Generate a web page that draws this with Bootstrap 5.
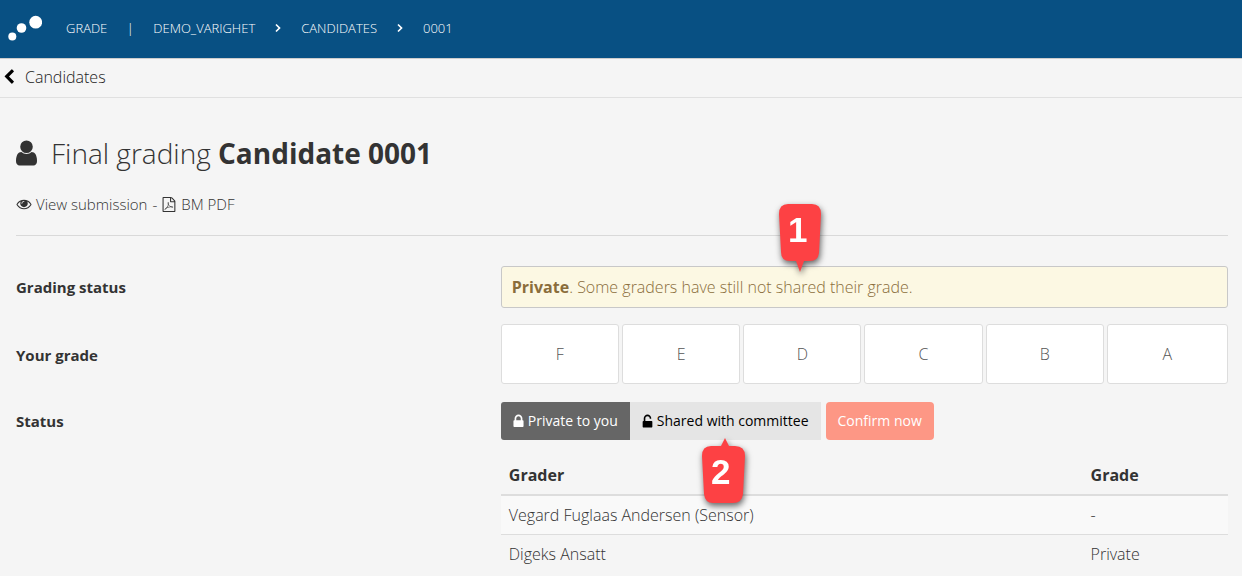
<!DOCTYPE html>
<html lang="en">
<head>
<meta charset="utf-8">
<meta name="viewport" content="width=device-width, initial-scale=1">
<title>Final grading - Candidate 0001</title>
<link href="https://cdn.jsdelivr.net/npm/bootstrap@5.3.0/dist/css/bootstrap.min.css" rel="stylesheet">
<style>
body { font-family: "Open Sans", sans-serif; font-size: 15px; font-weight: 300; line-height: 22px; color: #333; background: #f5f5f5; }
a { color: inherit; text-decoration: none; }
strong, .row-label, th { font-weight: 700; }
svg.glyph { width: 1em; height: 1em; fill: currentColor; flex: none; }
svg.lock { width: 11px; }
.topbar { background: #085083; color: #fff; height: 58px; font-size: 13px; gap: 16px; padding: 0 8px 2px; }
.brand-dots { width: 34px; height: 26px; margin-right: 8px; }
.sep { width: 14px; text-align: center; }
.backbar { border-top: 1px solid #ccc; border-bottom: 1px solid #e0e0e0; height: 40px; padding: 0 1px 2px; color: #222; font-size: 16px; }
.backbar .glyph { color: #000; }
.page { padding: 35px 14px 0 16px; }
.title { font-size: 28px; font-weight: 300; line-height: 40px; gap: 14px; margin-bottom: 20px; }
.title .glyph { width: 21px; height: 28px; }
.tools { gap: 5px; padding-bottom: 20px; border-bottom: 1px solid #d9d9d9; margin-bottom: 30px; }
.tools a { gap: 4px; }
.tools .eye { width: 16px; }
.form-line { display: grid; grid-template-columns: 2fr 3fr; align-items: center; }
.notice { background: #fcf8e3; border: 1px solid #c8c8c8; border-radius: 3px; color: #8a6d3b; font-size: 16px; padding: 9px 10px; margin-bottom: 16px; }
.grades { display: grid; grid-template-columns: repeat(6, 1fr); margin-bottom: 18px; }
.grade-btn { height: 60px; background: #fff; border: 1px solid #ddd; border-radius: 3px; color: #555; font-size: 16px; font-weight: 300; margin-right: 3px; }
.grade-btn:last-child { margin-right: 0; }
.state-btn { font-size: 14px; font-weight: 400; line-height: 22px; height: 38px; padding: 8px 12px; border: 0; border-radius: 3px; gap: 4px; }
.state-on { background: #666; color: #fff; border-radius: 3px 0 0 3px; }
.state-off { background: #e5e5e5; color: #000; border-radius: 0; }
.confirm { background: #fd9785; color: #fff; margin-left: 5px; border-radius: 4px; }
.graders { font-size: 16px; }
.graders th, .graders td { padding: 8px; }
.graders th { border-bottom: 2px solid #ddd; }
.graders tr + tr td { border-top: 1px solid #ddd; }
.graders tbody tr:nth-child(odd) { background: #f9f9f9; }
.callout-pin { position: absolute; z-index: 3; width: 44px; height: 68px; color: #fff; font: bold 35px/52px "Liberation Sans", sans-serif; text-align: center; pointer-events: none; filter: drop-shadow(1px 3px 3px rgba(0,0,0,.6)); }
.callout-pin svg { position: absolute; inset: 0; z-index: -1; fill: #fd4144; }
.pin-down { left: 276px; top: -63px; padding-right: 4px; }
.pin-up { left: 71px; top: 35px; padding: 9px 4px 0 0; }
</style>
</head>
<body>
<nav class="topbar d-flex align-items-center">
  <a href="#" aria-label="Home" class="d-flex"><svg class="brand-dots" viewBox="0 0 34 26" fill="#fff"><circle cx="4.3" cy="21.5" r="4"/><circle cx="13.5" cy="13" r="4.8"/><circle cx="27.7" cy="7.2" r="6.4"/></svg></a>
  <a href="#">GRADE</a><span class="sep">|</span>
  <a href="#">DEMO_VARIGHET</a>
  <svg class="sep" height="10" viewBox="0 0 14 10" fill="none" stroke="#fff" stroke-width="1.7"><path d="M5 1.5 8.5 5 5 8.5"/></svg>
  <a href="#">CANDIDATES</a>
  <svg class="sep" height="10" viewBox="0 0 14 10" fill="none" stroke="#fff" stroke-width="1.7"><path d="M5 1.5 8.5 5 5 8.5"/></svg>
  <a href="#">0001</a>
</nav>
<div class="backbar d-flex align-items-center">
  <a href="#" class="d-flex align-items-center gap-2"><svg class="glyph" viewBox="0 0 1792 1792"><path d="M1427 301l-531 531 531 531q19 19 19 45t-19 45l-166 166q-19 19-45 19t-45-19l-742-742q-19-19-19-45t19-45l742-742q19-19 45-19t45 19l166 166q19 19 19 45t-19 45z"/></svg>Candidates</a>
</div>
<main class="page">
  <h1 class="title d-flex align-items-center"><svg class="glyph" viewBox="256 64 1280 1664"><path d="M1536 1399q0 109-62.5 187t-150.5 78h-854q-88 0-150.5-78t-62.5-187q0-85 8.5-160.5t31.5-152 58.5-131 94-89 134.5-34.5q131 128 313 128t313-128q76 0 134.5 34.5t94 89 58.5 131 31.5 152 8.5 160.5zm-256-887q0 159-112.5 271.5t-271.5 112.5-271.5-112.5-112.5-271.5 112.5-271.5 271.5-112.5 271.5 112.5 112.5 271.5z"/></svg><span>Final grading <strong>Candidate 0001</strong></span></h1>
  <div class="tools d-flex align-items-center">
    <a href="#" class="d-flex align-items-center"><svg class="glyph eye" viewBox="0 64 1792 1792"><path d="M1664 960q-152-236-381-353 61 104 61 225 0 185-131.5 316.5t-316.5 131.5-316.5-131.5-131.5-316.5q0-121 61-225-229 117-381 353 133 205 333.5 326.5t434.5 121.5 434.5-121.5 333.5-326.5zm-720-384q0-20-14-34t-34-14q-125 0-214.5 89.5t-89.5 214.5q0 20 14 34t34 14 34-14 14-34q0-86 61-147t147-61q20 0 34-14t14-34zm848 384q0 34-20 69-140 230-376.5 368.5t-499.5 138.5-499.5-139-376.5-368q-20-35-20-69t20-69q140-229 376.5-368t499.5-139 499.5 139 376.5 368q20 35 20 69z"/></svg>View submission</a>
    <span>-</span>
    <a href="#" class="d-flex align-items-center"><svg class="glyph" viewBox="64 0 1792 1792"><path d="M1596 380q28 28 48 76t20 88v1152q0 40-28 68t-68 28h-1344q-40 0-68-28t-28-68v-1600q0-40 28-68t68-28h896q40 0 88 20t76 48zm-444-244v376h376q-10-29-22-41l-313-313q-12-12-41-22zm384 1528v-1024h-416q-40 0-68-28t-28-68v-416h-768v1536h1280z"/><path d="M400 1500Q640 1380 790 1020 880 790 810 640 750 760 850 950 960 1150 1320 1230 1400 1220 1360 1180 1160 1100 700 1260 440 1360 400 1500" fill="none" stroke="currentColor" stroke-width="75"/></svg>BM PDF</a>
  </div>

  <div class="form-line">
    <div class="row-label pb-3">Grading status</div>
    <div class="notice position-relative" role="status"><strong>Private</strong>. Some graders have still not shared their grade.
      <span class="callout-pin pin-down"><svg viewBox="0 0 44 68"><path d="M10 0H34Q43 0 43 10L41 49Q40 57 32 57H26L22 68 18 57H12Q3 57 3 48L1 10Q1 0 10 0Z"/></svg>1</span>
    </div>
  </div>
  <div class="form-line">
    <div class="row-label pb-3" id="grade-label">Your grade</div>
    <div class="grades" role="group" aria-labelledby="grade-label">
      <button type="button" class="grade-btn">F</button><button type="button" class="grade-btn">E</button><button type="button" class="grade-btn">D</button><button type="button" class="grade-btn">C</button><button type="button" class="grade-btn">B</button><button type="button" class="grade-btn">A</button>
    </div>
  </div>
  <div class="form-line mb-3">
    <div class="row-label" id="status-label">Status</div>
    <div class="d-flex" role="group" aria-labelledby="status-label">
      <button type="button" class="state-btn state-on d-flex align-items-center"><svg class="glyph lock" viewBox="320 64 1152 1600"><path d="M640 768h512v-192q0-106-75-181t-181-75-181 75-75 181v192zm832 96v576q0 40-28 68t-68 28h-960q-40 0-68-28t-28-68v-576q0-40 28-68t68-28h32v-192q0-184 132-316t316-132 316 132 132 316v192h32q40 0 68 28t28 68z"/></svg>Private to you</button>
      <div class="position-relative">
        <button type="button" class="state-btn state-off d-flex align-items-center"><svg class="glyph lock" viewBox="320 -64 1152 1664"><path d="M1376 768q40 0 68 28t28 68v576q0 40-28 68t-68 28h-960q-40 0-68-28t-28-68v-576q0-40 28-68t68-28h32v-320q0-185 131.5-316.5t316.5-131.5 316.5 131.5 131.5 316.5q0 26-19 45t-45 19h-64q-26 0-45-19t-19-45q0-106-75-181t-181-75-181 75-75 181v320h736z"/></svg>Shared with committee</button>
        <span class="callout-pin pin-up"><svg viewBox="0 0 44 68"><path d="M10 9H20L24 1 28 9H34Q44 9 44 19L42 57Q41 66 32 66H12Q4 66 3 57L1 19Q1 9 10 9Z"/></svg>2</span>
      </div>
      <button type="button" class="state-btn confirm">Confirm now</button>
    </div>
  </div>
  <div class="form-line">
    <div></div>
    <table class="graders w-100">
      <colgroup><col style="width:80%"><col></colgroup>
      <thead><tr><th>Grader</th><th>Grade</th></tr></thead>
      <tbody>
        <tr><td>Vegard Fuglaas Andersen (Sensor)</td><td>-</td></tr>
        <tr><td>Digeks Ansatt</td><td>Private</td></tr>
      </tbody>
    </table>
  </div>
</main>
<script src="https://cdn.jsdelivr.net/npm/bootstrap@5.3.0/dist/js/bootstrap.bundle.min.js"></script>
</body>
</html>
